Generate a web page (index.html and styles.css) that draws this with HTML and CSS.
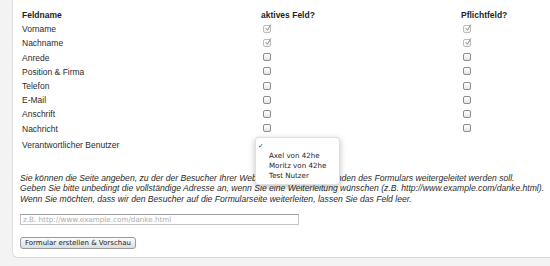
FILE: index.html
```html
<!DOCTYPE html>
<html lang="de">
<head>
    <meta charset="UTF-8">
    <title>Formular erstellen</title>
    <link rel="stylesheet" href="styles.css">
</head>
<body>
    <div class="panel">
        <div class="fields">
            <div class="row head">
                <span class="label">Feldname</span>
                <span class="label">aktives Feld?</span>
                <span class="label">Pflichtfeld?</span>
            </div>
            <div class="row">
                <span class="label">Vorname</span>
                <span class="cell"><i class="box on"><svg viewBox="0 0 10 10"><path d="M2.2 5.2 L4.2 7.8 L8.6 0.6" /></svg></i></span>
                <span class="cell"><i class="box on"><svg viewBox="0 0 10 10"><path d="M2.2 5.2 L4.2 7.8 L8.6 0.6" /></svg></i></span>
            </div>
            <div class="row">
                <span class="label">Nachname</span>
                <span class="cell"><i class="box on"><svg viewBox="0 0 10 10"><path d="M2.2 5.2 L4.2 7.8 L8.6 0.6" /></svg></i></span>
                <span class="cell"><i class="box on"><svg viewBox="0 0 10 10"><path d="M2.2 5.2 L4.2 7.8 L8.6 0.6" /></svg></i></span>
            </div>
            <div class="row">
                <span class="label">Anrede</span>
                <span class="cell"><i class="box"></i></span>
                <span class="cell"><i class="box"></i></span>
            </div>
            <div class="row">
                <span class="label">Position &amp; Firma</span>
                <span class="cell"><i class="box"></i></span>
                <span class="cell"><i class="box"></i></span>
            </div>
            <div class="row">
                <span class="label">Telefon</span>
                <span class="cell"><i class="box"></i></span>
                <span class="cell"><i class="box"></i></span>
            </div>
            <div class="row">
                <span class="label">E-Mail</span>
                <span class="cell"><i class="box"></i></span>
                <span class="cell"><i class="box"></i></span>
            </div>
            <div class="row">
                <span class="label">Anschrift</span>
                <span class="cell"><i class="box"></i></span>
                <span class="cell"><i class="box"></i></span>
            </div>
            <div class="row">
                <span class="label">Nachricht</span>
                <span class="cell"><i class="box"></i></span>
                <span class="cell"><i class="box"></i></span>
            </div>
            <div class="row user">
                <span class="label">Verantwortlicher Benutzer</span>
                <span class="cell">
                    <!-- the open select menu -->
                    <div class="menu">
                        <div class="option selected"><span class="tick">&#10003;</span>&nbsp;</div>
                        <div class="option">Axel von 42he</div>
                        <div class="option">Moritz von 42he</div>
                        <div class="option">Test Nutzer</div>
                    </div>
                </span>
                <span class="cell"></span>
            </div>
        </div>

        <p class="hint">
            Sie können die Seite angeben, zu der der Besucher Ihrer Webseite nach dem Absenden des Formulars weitergeleitet werden soll.<br>
            Geben Sie bitte unbedingt die vollständige Adresse an, wenn Sie eine Weiterleitung wünschen (z.B. http://www.example.com/danke.html).<br>
            Wenn Sie möchten, dass wir den Besucher auf die Formularseite weiterleiten, lassen Sie das Feld leer.
        </p>

        <input type="text" class="url" placeholder="z.B. http://www.example.com/danke.html">

        <button type="button" class="submit">Formular erstellen &amp; Vorschau</button>
    </div>
</body>
</html>
```

FILE: styles.css
```css
body {
    margin: 0;
    padding: 0 0 8px 12px;
    background-color: #f3f3f3;
    font-family: "Liberation Sans", Arial, sans-serif;
    font-size: 8.5px;
    color: #2b2b2b;
    overflow: hidden;
}

.panel {
    background-color: #fff;
    border-left: 1px solid #dedede;
    border-bottom: 1px solid #d8d8d8;
    border-bottom-left-radius: 6px;
    padding: 8px 0 8px 7px;
}

.row {
    display: grid;
    grid-template-columns: 239px 200px 1fr;
    align-items: center;
    height: 14.2px;
}

.row.head .label {
    font-weight: bold;
    color: #1e1e1e;
}

.row.user {
    height: 19px;
}

.label {
    padding-left: 2px;
    white-space: nowrap;
}

.cell {
    position: relative;
    display: flex;
    align-items: center;
    height: 100%;
}

.box {
    position: relative;
    display: block;
    width: 6px;
    height: 6px;
    margin: -1px 0 0 3.5px;
    border: 1px solid #8c8c8c;
    border-radius: 2px;
    background: linear-gradient(#fff, #e6e6e6);
}

.box.on {
    border-color: #bcbcbc;
    background: linear-gradient(#fff, #f0f0f0);
}

.box svg {
    position: absolute;
    left: 0;
    top: -2px;
    width: 8px;
    height: 8px;
    fill: none;
    stroke: #808080;
    stroke-width: 1.1;
}

.menu {
    position: absolute;
    left: -4px;
    top: 1.2px;
    width: 85px;
    padding: 3px 0;
    box-sizing: border-box;
    background-color: #fff;
    border: 1px solid rgba(0, 0, 0, 0.12);
    border-radius: 4px;
    box-shadow: 0 2px 6px rgba(0, 0, 0, 0.25);
    font-family: "DejaVu Sans", Verdana, sans-serif;
    font-size: 7.1px;
    color: #222;
    z-index: 2;
}

.option {
    position: relative;
    height: 10px;
    line-height: 10px;
    padding-left: 13px;
    white-space: nowrap;
}

.tick {
    position: absolute;
    left: 2px;
    top: 0;
    font-size: 6.5px;
}

.hint {
    margin: 18px 0 0;
    font-size: 8.6px;
    font-style: italic;
    line-height: 10.4px;
    color: #2b2b2b;
    white-space: nowrap;
}

.url {
    display: block;
    box-sizing: border-box;
    width: 279px;
    height: 11.5px;
    margin: 10px 0 0;
    padding: 0 2px;
    border: 1px solid #c4c4c4;
    border-top-color: #9e9e9e;
    font-family: "DejaVu Sans", Verdana, sans-serif;
    font-size: 7.2px;
    color: #333;
    outline: none;
}

.url::placeholder {
    color: #acacac;
}

.submit {
    display: block;
    box-sizing: border-box;
    height: 12px;
    margin: 11.5px 0 0;
    padding: 0 4px;
    border: 1px solid #9a9a9a;
    border-radius: 3px;
    background: linear-gradient(#fdfdfd, #dcdcdc);
    font-family: "DejaVu Sans", Verdana, sans-serif;
    font-size: 7px;
    line-height: 10px;
    color: #222;
    cursor: pointer;
}
```
